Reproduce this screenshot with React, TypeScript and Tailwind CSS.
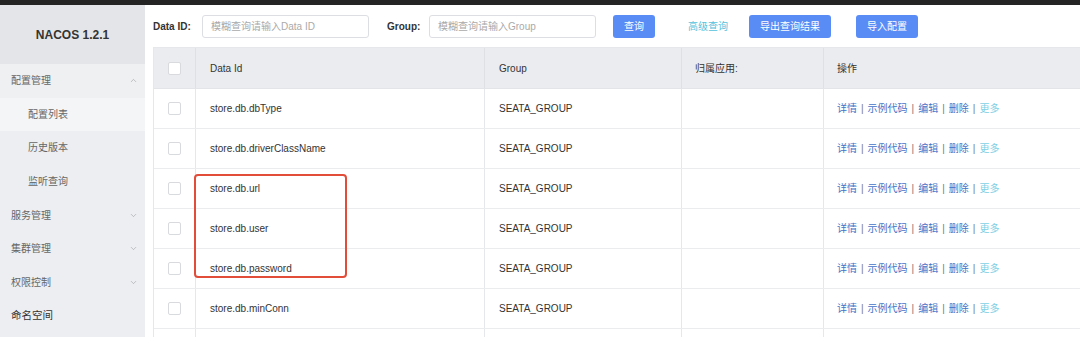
import { ChevronDown, ChevronUp } from "lucide-react"

const font = { fontFamily: '"Liberation Sans", "Noto Sans CJK SC", sans-serif' }

const menu = [
  { label: "配置管理", icon: "up", sub: false, bg: "bg-[#eef0f2]" },
  { label: "配置列表", sub: true, bg: "bg-[#f4f5f7]" },
  { label: "历史版本", sub: true },
  { label: "监听查询", sub: true },
  { label: "服务管理", icon: "down" },
  { label: "集群管理", icon: "down" },
  { label: "权限控制", icon: "down" },
  { label: "命名空间", dark: true },
]

const rows = [
  "store.db.dbType",
  "store.db.driverClassName",
  "store.db.url",
  "store.db.user",
  "store.db.password",
  "store.db.minConn",
]

function Sidebar() {
  return (
    <div className="w-[145px] shrink-0 bg-[#eceef1] h-full">
      <div className="h-[59px] bg-[#e3e5e8] flex items-center justify-center text-[12px] font-bold text-[#333]">
        NACOS 1.2.1
      </div>
      {menu.map((m: any) => (
        <div
          key={m.label}
          className={`h-[33.6px] flex items-center justify-between pr-[7px] ${m.sub ? "pl-[28px]" : "pl-[11px]"} ${m.bg ?? ""} ${m.dark ? "text-[#333] text-[10.5px]" : "text-[#666] text-[10px]"}`}
        >
          <span>{m.label}</span>
          {m.icon === "up" && <ChevronUp size={9} strokeWidth={1.5} className="text-[#999]" />}
          {m.icon === "down" && <ChevronDown size={9} strokeWidth={1.5} className="text-[#999]" />}
        </div>
      ))}
    </div>
  )
}

function Checkbox() {
  return <div className="w-[13px] h-[13px] border border-[#d8dade] rounded-[2px] bg-white" />
}

function Actions() {
  const sep = <span className="text-[#777] mx-[4px]">|</span>
  return (
    <div className="flex items-center text-[10px] text-[#4273c8]">
      <span>详情</span>
      {sep}
      <span>示例代码</span>
      {sep}
      <span>编辑</span>
      {sep}
      <span>删除</span>
      {sep}
      <span className="text-[#7ed0e4]">更多</span>
    </div>
  )
}

export default function App() {
  return (
    <div className="w-[1080px] h-[337px] overflow-hidden bg-white flex flex-col" style={font}>
      <div className="h-[5px] bg-[#242424] shrink-0" />
      <div className="flex flex-1 min-h-0">
        <Sidebar />
        <div className="flex-1 pl-[8px] relative">
          {/* search bar */}
          <div className="h-[42px] flex items-center text-[10px]">
            <span className="font-bold text-[#333] w-[49px]">Data ID:</span>
            <div className="w-[167px] h-[23px] border border-[#dcdee3] rounded-[3px] flex items-center pl-[8px] text-[#aaa]">
              模糊查询请输入Data ID
            </div>
            <span className="font-bold text-[#333] ml-[18px] w-[42px]">Group:</span>
            <div className="w-[167px] h-[23px] border border-[#dcdee3] rounded-[3px] flex items-center pl-[8px] text-[#aaa]">
              模糊查询请输入Group
            </div>
            <button className="ml-[17px] w-[42px] h-[23px] rounded-[3px] bg-[#5a8cf6] text-white text-[10px]">查询</button>
            <span className="ml-[33px] text-[#53c2dd]">高级查询</span>
            <button className="ml-[21px] w-[82px] h-[23px] rounded-[3px] bg-[#5a8cf6] text-white text-[10px]">导出查询结果</button>
            <button className="ml-[25px] w-[62px] h-[23px] rounded-[3px] bg-[#5a8cf6] text-white text-[10px]">导入配置</button>
          </div>

          {/* table */}
          <div className="border-l border-t border-[#e6e7ea] text-[10px] text-[#333] w-[940px]">
            <div className="flex h-[41px] bg-[#ebecef] border-b border-[#e3e4e7]">
              <div className="w-[42px] flex items-center justify-center border-r border-[#dfe0e3]">
                <Checkbox />
              </div>
              <div className="w-[289px] flex items-center pl-[14px] border-r border-[#dfe0e3]">Data Id</div>
              <div className="w-[197px] flex items-center pl-[14px] border-r border-[#dfe0e3]">Group</div>
              <div className="w-[142px] flex items-center pl-[13px] border-r border-[#dfe0e3]">归属应用:</div>
              <div className="flex-1 flex items-center pl-[13px]">操作</div>
            </div>
            {rows.map((r) => (
              <div key={r} className="flex h-[40px] border-b border-[#ebecee]">
                <div className="w-[42px] flex items-center justify-center border-r border-[#e6e7ea]">
                  <Checkbox />
                </div>
                <div className="w-[289px] flex items-center pl-[14px] border-r border-[#e6e7ea]">{r}</div>
                <div className="w-[197px] flex items-center pl-[14px] border-r border-[#e6e7ea]">SEATA_GROUP</div>
                <div className="w-[142px] border-r border-[#e6e7ea]" />
                <div className="flex-1 flex items-center pl-[13px]">
                  <Actions />
                </div>
              </div>
            ))}
            <div className="flex h-[40px]">
              <div className="w-[42px] border-r border-[#e6e7ea]" />
              <div className="w-[289px] border-r border-[#e6e7ea]" />
              <div className="w-[197px] border-r border-[#e6e7ea]" />
              <div className="w-[142px] border-r border-[#e6e7ea]" />
            </div>
          </div>

          {/* annotation box */}
          <div className="absolute left-[49px] top-[169px] w-[153px] h-[104px] border-2 border-[#e24d3a] rounded-[4px]" />
        </div>
      </div>
    </div>
  )
}
